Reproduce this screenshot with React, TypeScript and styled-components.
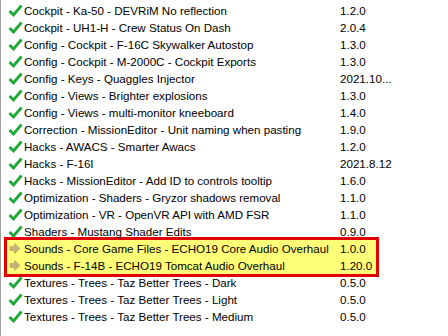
import React from "react";
import styled, { createGlobalStyle } from "styled-components";

const Global = createGlobalStyle`
  html, body { margin: 0; padding: 0; background: #ffffff; }
  body { font-family: "Liberation Sans", Arial, sans-serif; }
`;

const List = styled.div`
  width: 448px;
  height: 336px;
  box-sizing: border-box;
  border-left: 1px solid #a0a0a0;
  padding-top: 2px;
  background: #ffffff;
  overflow: hidden;
`;

const Row = styled.div`
  position: relative;
  z-index: 1;
  display: grid;
  grid-template-columns: 23px 316px 1fr;
  height: 17px;
  line-height: 17px;
  font-size: 11.6px;
  color: #000000;
  white-space: nowrap;
`;

const IconCell = styled.div`
  display: flex;
  align-items: center;
  justify-content: center;
  padding-left: 5px;
`;

const Name = styled.div`
  overflow: hidden;
`;

const Version = styled.div``;

const Highlight = styled.div`
  position: relative;
  &::before {
    content: "";
    position: absolute;
    z-index: 0;
    top: -3px;
    bottom: -3px;
    left: 3px;
    width: 375px;
    box-sizing: border-box;
    border: 3px solid #e00000;
    background: #ffff78;
  }
`;

const Check = () => (
  <svg width="15" height="13" viewBox="0 0 15 13">
    <path d="M1.5 7 L5.5 11 L13.5 1.5" fill="none" stroke="#1fa83a" strokeWidth="2.8" strokeLinecap="butt" strokeLinejoin="miter" />
  </svg>
);

const Arrow = () => (
  <svg width="12" height="11" viewBox="0 0 12 11">
    <path d="M1 3.5 H5.5 V0.5 L11 5.5 L5.5 10.5 V7.5 H1 Z" fill="#c9b27a" stroke="#b09a60" strokeWidth="0.6" />
  </svg>
);

type Item = { name: string; version: string; arrow?: boolean };

const before: Item[] = [
  { name: "Cockpit - Ka-50 - DEVRiM No reflection", version: "1.2.0" },
  { name: "Cockpit - UH1-H - Crew Status On Dash", version: "2.0.4" },
  { name: "Config - Cockpit - F-16C Skywalker Autostop", version: "1.3.0" },
  { name: "Config - Cockpit - M-2000C - Cockpit Exports", version: "1.3.0" },
  { name: "Config - Keys - Quaggles Injector", version: "2021.10..." },
  { name: "Config - Views - Brighter explosions", version: "1.3.0" },
  { name: "Config - Views - multi-monitor kneeboard", version: "1.4.0" },
  { name: "Correction - MissionEditor - Unit naming when pasting", version: "1.9.0" },
  { name: "Hacks - AWACS - Smarter Awacs", version: "1.2.0" },
  { name: "Hacks - F-16I", version: "2021.8.12" },
  { name: "Hacks - MissionEditor - Add ID to controls tooltip", version: "1.6.0" },
  { name: "Optimization - Shaders - Gryzor shadows removal", version: "1.1.0" },
  { name: "Optimization - VR - OpenVR API with AMD FSR", version: "1.1.0" },
  { name: "Shaders - Mustang Shader Edits", version: "0.9.0" },
];

const highlighted: Item[] = [
  { name: "Sounds - Core Game Files - ECHO19 Core Audio Overhaul", version: "1.0.0", arrow: true },
  { name: "Sounds - F-14B - ECHO19 Tomcat Audio Overhaul", version: "1.20.0", arrow: true },
];

const after: Item[] = [
  { name: "Textures - Trees - Taz Better Trees - Dark", version: "0.5.0" },
  { name: "Textures - Trees - Taz Better Trees - Light", version: "0.5.0" },
  { name: "Textures - Trees - Taz Better Trees - Medium", version: "0.5.0" },
];

const ModRow = ({ item }: { item: Item }) => (
  <Row>
    <IconCell>{item.arrow ? <Arrow /> : <Check />}</IconCell>
    <Name>{item.name}</Name>
    <Version>{item.version}</Version>
  </Row>
);

export default function App() {
  return (
    <>
      <Global />
      <List>
        {before.map((it) => (
          <ModRow key={it.name} item={it} />
        ))}
        <Highlight>
          {highlighted.map((it) => (
            <ModRow key={it.name} item={it} />
          ))}
        </Highlight>
        {after.map((it) => (
          <ModRow key={it.name} item={it} />
        ))}
      </List>
    </>
  );
}
